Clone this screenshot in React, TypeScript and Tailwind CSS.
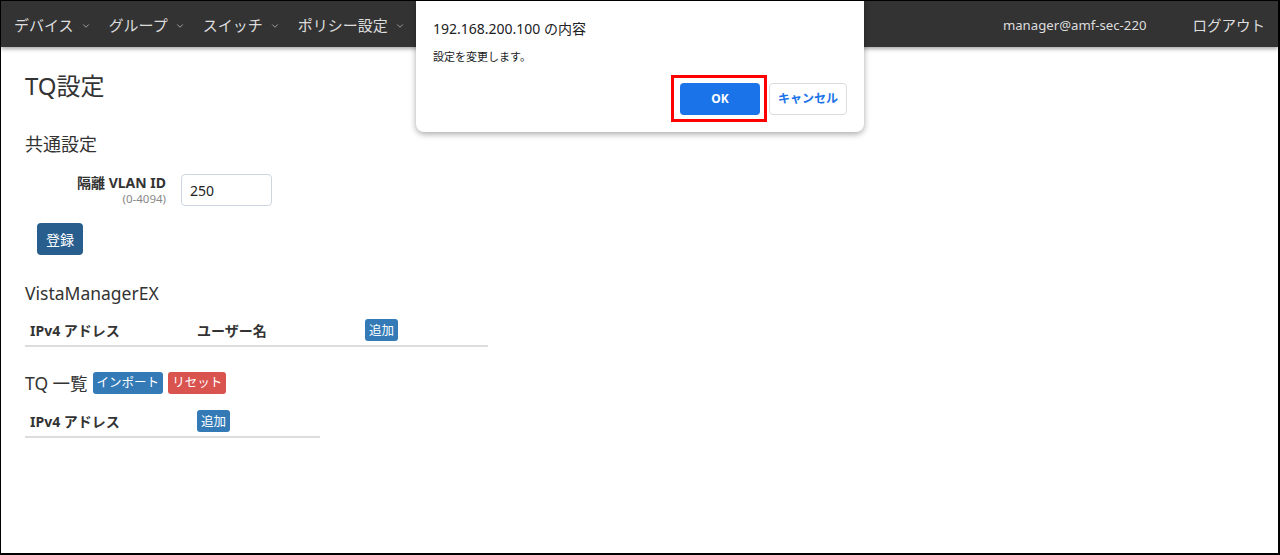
import { ChevronDown } from "lucide-react";

const font = { fontFamily: '"Noto Sans", "Noto Sans CJK JP", sans-serif' };

const navItems = ["デバイス", "グループ", "スイッチ", "ポリシー設定"];

function SmallBtn({ children, color = "blue" }: { children: React.ReactNode; color?: "blue" | "red" }) {
  return (
    <span
      className={`inline-flex h-[22px] items-center rounded-[3px] px-[4px] pt-[2px] text-[12.5px] font-normal leading-none text-white ${
        color === "red" ? "bg-[#d9534f]" : "bg-[#337ab7]"
      }`}
    >
      {children}
    </span>
  );
}

export default function App() {
  return (
    <div
      className="relative h-[555px] w-[1280px] overflow-hidden border-t border-l border-r-2 border-b-2 border-black bg-white text-[#333]"
      style={font}
    >
      {/* navbar */}
      <div className="flex h-[46px] items-center bg-[#333] pl-[13px] pr-[13px] pt-[3px] text-[15px] text-[#ddd] shadow-[0_2px_4px_rgba(0,0,0,0.35)]">
        <div className="flex gap-[18px]">
          {navItems.map((n) => (
            <span key={n} className="flex items-center gap-[7px]">
              {n}
              <ChevronDown size={10} strokeWidth={1.5} />
            </span>
          ))}
        </div>
        <div className="ml-auto flex items-center gap-[46px] text-[13.2px]">
          <span>manager@amf-sec-220</span>
          <span className="text-[14.5px]">ログアウト</span>
        </div>
      </div>

      {/* page */}
      <div className="px-[24px] pt-[27px]">
        <h1 className="text-[24px] leading-none">TQ設定</h1>
        <h2 className="mt-[37px] text-[18px] leading-none">共通設定</h2>

        <div className="mt-[21px] flex items-start">
          <div className="w-[141px] text-right">
            <div className="text-[14px] font-bold leading-[17px]">隔離 VLAN ID</div>
            <div className="mt-[1px] text-[11.5px] leading-[14px] text-[#888]">(0-4094)</div>
          </div>
          <div className="ml-[15px] flex h-[32px] w-[91px] items-center rounded-[4px] border border-[#ccd6e0] px-[8px] text-[14px] text-[#222]">
            250
          </div>
        </div>

        <div className="ml-[12px] mt-[17px] inline-flex h-[32px] items-center rounded-[4px] bg-[#285e8e] px-[9px] text-[14px] text-white">
          登録
        </div>

        <h2 className="mt-[30px] text-[17.5px] leading-none">VistaManagerEX</h2>
        <div className="mt-[17px] flex h-[27px] w-[463px] items-center border-b-2 border-[#ddd] pb-[4px] text-[14px] font-bold">
          <span className="ml-[5px] w-[167px]">IPv4 アドレス</span>
          <span className="w-[168px]">ユーザー名</span>
          <SmallBtn>追加</SmallBtn>
        </div>

        <div className="mt-[23px] flex items-center gap-[5px]">
          <span className="mr-[0px] text-[17.5px]">TQ 一覧</span>
          <SmallBtn>インポート</SmallBtn>
          <SmallBtn color="red">リセット</SmallBtn>
        </div>
        <div className="mt-[15px] flex h-[27px] w-[295px] items-center border-b-2 border-[#ddd] pb-[4px] text-[14px] font-bold">
          <span className="ml-[5px] w-[167px]">IPv4 アドレス</span>
          <SmallBtn>追加</SmallBtn>
        </div>
      </div>

      {/* alert dialog */}
      <div className="absolute -top-[1px] left-[415px] h-[132px] w-[448px] rounded-b-[8px] bg-white shadow-[0_2px_6px_rgba(0,0,0,0.35)]">
        <div className="pl-[17px] pt-[19px] text-[14px] leading-[20px] text-[#202124]">192.168.200.100 の内容</div>
        <div className="pl-[17px] pt-[11px] text-[11px] leading-[14px] text-[#202124]">設定を変更します。</div>
        <div className="absolute right-[17px] top-[83px] flex gap-[9px]">
          <div className="relative">
            <div className="flex h-[32px] w-[80px] items-center justify-center rounded-[4px] bg-[#1a73e8] text-[12px] font-bold text-white">
              OK
            </div>
            <div className="absolute -left-[9px] -top-[8px] h-[47px] w-[96px] border-[3px] border-[#ff0000]" />
          </div>
          <div className="flex h-[32px] w-[78px] items-center justify-center rounded-[4px] border border-[#dadce0] text-[12px] font-bold text-[#1a73e8]">
            キャンセル
          </div>
        </div>
      </div>
    </div>
  );
}
